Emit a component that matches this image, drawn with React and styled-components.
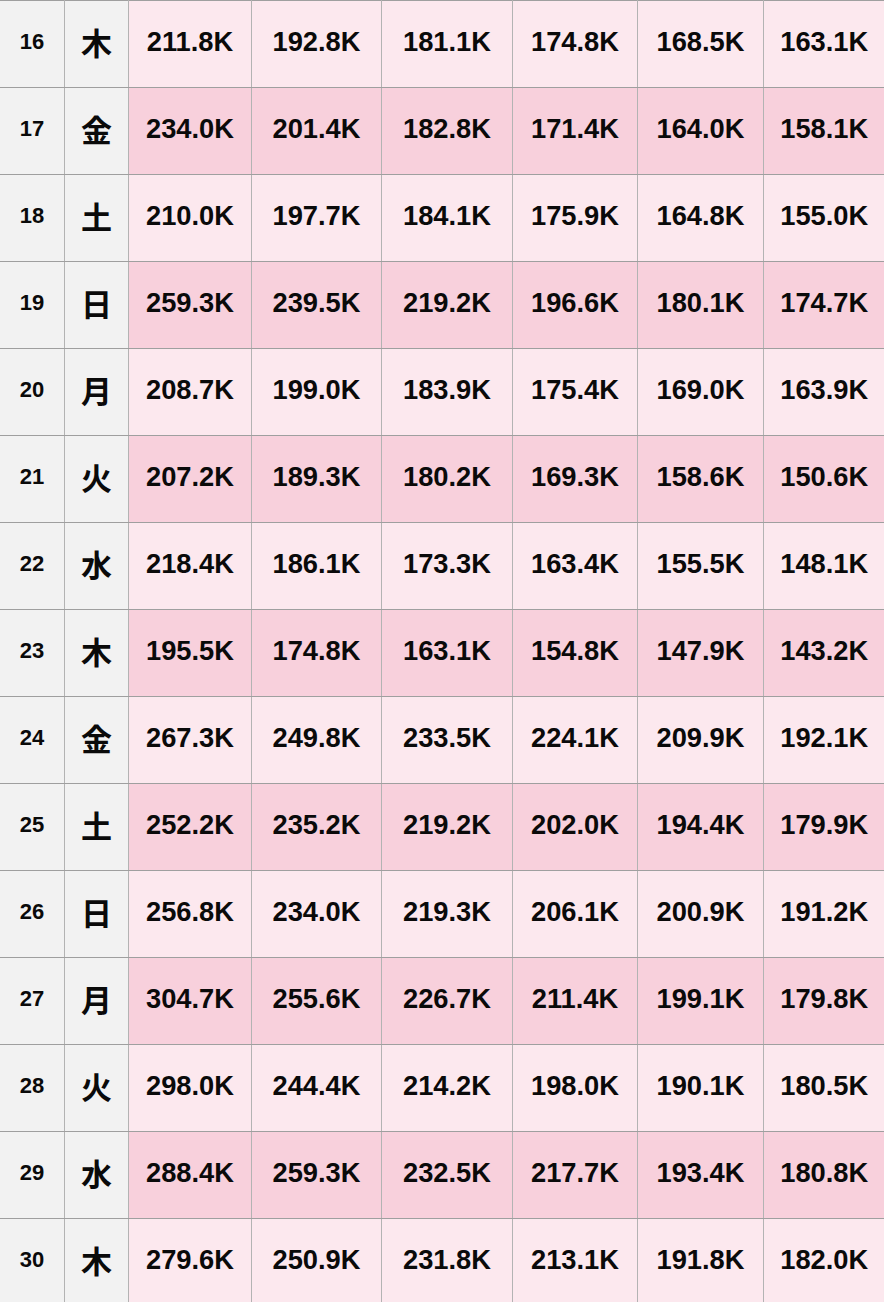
import React from "react";
import styled, { createGlobalStyle } from "styled-components";

const GlobalStyle = createGlobalStyle`
  html, body {
    margin: 0;
    padding: 0;
    background: #ffffff;
    overflow: hidden;
  }
  body {
    font-family: "Liberation Sans", Arial, sans-serif;
  }
`;

const Wrapper = styled.div`
  width: 884px;
  height: 1302px;
  overflow: hidden;
`;

const Table = styled.table`
  border-collapse: collapse;
  table-layout: fixed;
  margin-left: -1px;
  width: 885px;
`;

const Row = styled.tr`
  height: 87px;
`;

const Cell = styled.td`
  border: 1px solid #b3b3b3;
  border-top-color: #9f9f9f;
  border-bottom-color: #9f9f9f;
  padding: 0 0 5px;
  text-align: center;
  vertical-align: middle;
  color: #0a0a0a;
  font-weight: 700;
  white-space: nowrap;
  &:last-child {
    border-right: none;
  }
`;

const DayCell = styled(Cell)`
  background: #f2f2f2;
  font-size: 22px;
`;

const WeekdayCell = styled(Cell)`
  background: #f2f2f2;
  font-family: "Noto Sans CJK JP", "Noto Sans", sans-serif;
  font-size: 31px;
  padding-bottom: 6px;
`;

const ValueCell = styled(Cell)`
  background: ${(props) => (props.$shaded ? "#f8d0dc" : "#fce8ee")};
  font-size: 27.3px;
`;

const widths = [65, 64, 123, 130, 131, 125, 126, 121];

const rows = [
  [16, "木", "211.8K", "192.8K", "181.1K", "174.8K", "168.5K", "163.1K"],
  [17, "金", "234.0K", "201.4K", "182.8K", "171.4K", "164.0K", "158.1K"],
  [18, "土", "210.0K", "197.7K", "184.1K", "175.9K", "164.8K", "155.0K"],
  [19, "日", "259.3K", "239.5K", "219.2K", "196.6K", "180.1K", "174.7K"],
  [20, "月", "208.7K", "199.0K", "183.9K", "175.4K", "169.0K", "163.9K"],
  [21, "火", "207.2K", "189.3K", "180.2K", "169.3K", "158.6K", "150.6K"],
  [22, "水", "218.4K", "186.1K", "173.3K", "163.4K", "155.5K", "148.1K"],
  [23, "木", "195.5K", "174.8K", "163.1K", "154.8K", "147.9K", "143.2K"],
  [24, "金", "267.3K", "249.8K", "233.5K", "224.1K", "209.9K", "192.1K"],
  [25, "土", "252.2K", "235.2K", "219.2K", "202.0K", "194.4K", "179.9K"],
  [26, "日", "256.8K", "234.0K", "219.3K", "206.1K", "200.9K", "191.2K"],
  [27, "月", "304.7K", "255.6K", "226.7K", "211.4K", "199.1K", "179.8K"],
  [28, "火", "298.0K", "244.4K", "214.2K", "198.0K", "190.1K", "180.5K"],
  [29, "水", "288.4K", "259.3K", "232.5K", "217.7K", "193.4K", "180.8K"],
  [30, "木", "279.6K", "250.9K", "231.8K", "213.1K", "191.8K", "182.0K"],
];

const App = () => {
  return (
    <Wrapper>
      <GlobalStyle />
      <Table>
        <colgroup>
          {widths.map((w, i) => (
            <col key={i} style={{ width: w }} />
          ))}
        </colgroup>
        <tbody>
          {rows.map(([day, weekday, ...values]) => (
            <Row key={day}>
              <DayCell>{day}</DayCell>
              <WeekdayCell>{weekday}</WeekdayCell>
              {values.map((v, i) => (
                <ValueCell key={i} $shaded={day % 2 === 1}>
                  {v}
                </ValueCell>
              ))}
            </Row>
          ))}
        </tbody>
      </Table>
    </Wrapper>
  );
};

export default App;
